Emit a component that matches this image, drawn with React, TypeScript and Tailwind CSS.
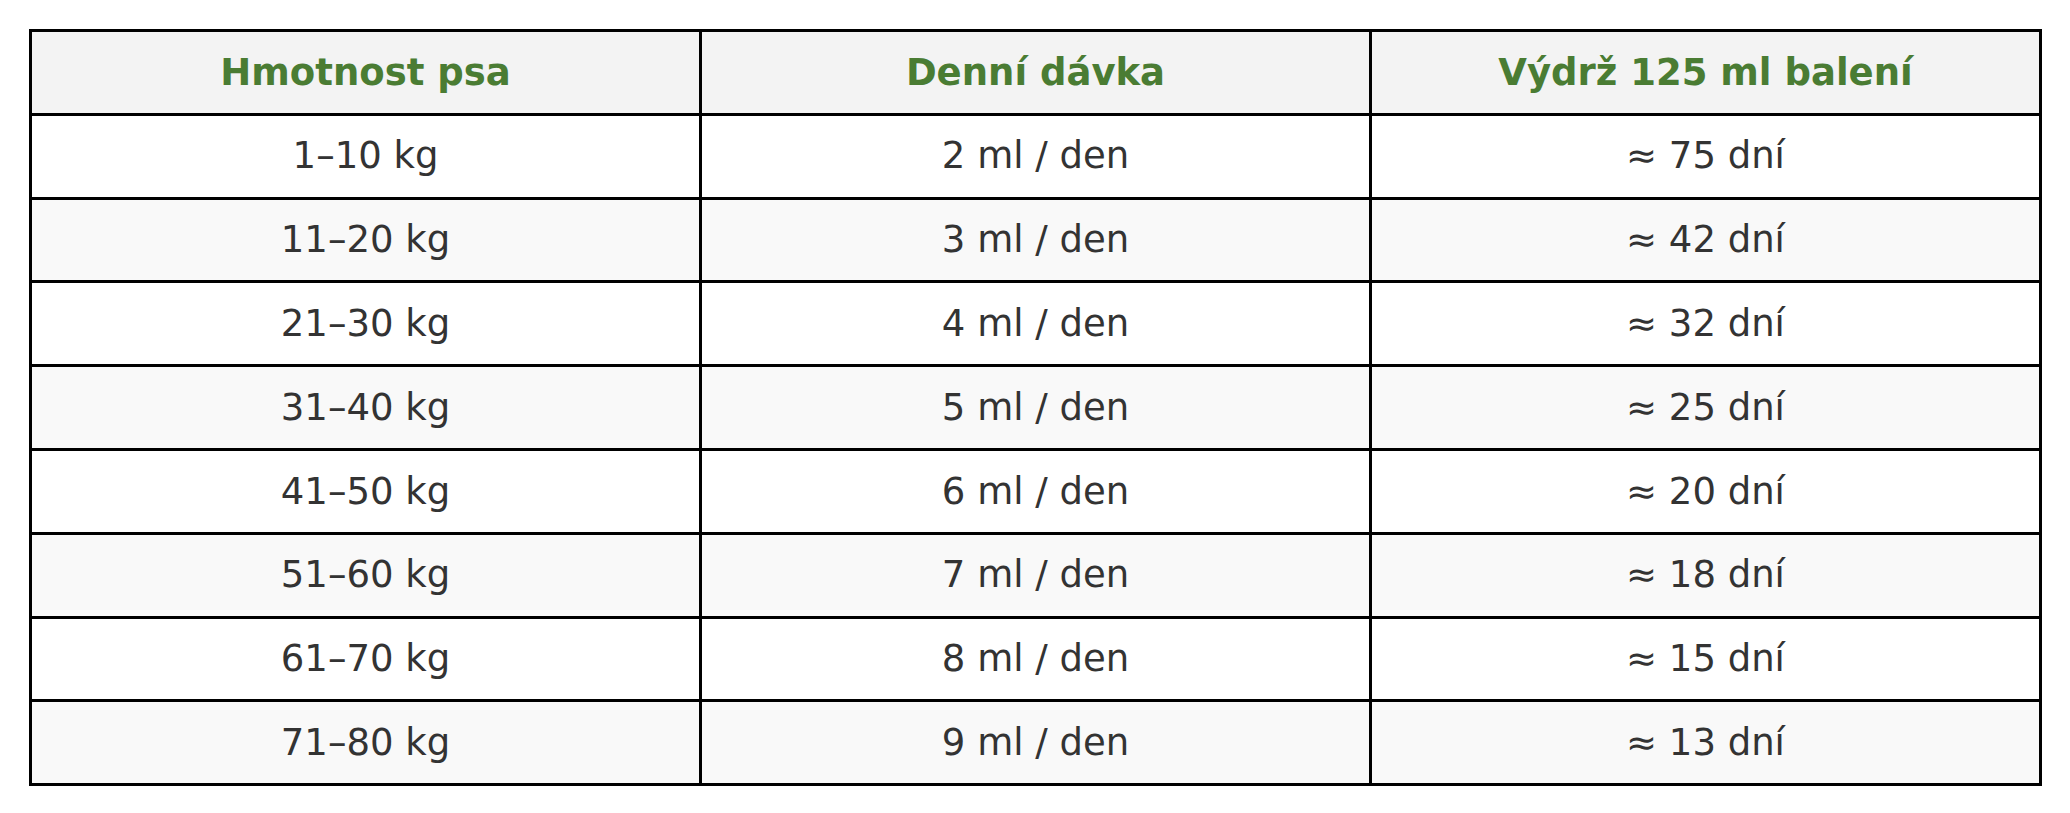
import React from 'react';

export default function App() {
  const rows = [
  ['1–10 kg', '2 ml / den', '≈ 75 dní'],
  ['11–20 kg', '3 ml / den', '≈ 42 dní'],
  ['21–30 kg', '4 ml / den', '≈ 32 dní'],
  ['31–40 kg', '5 ml / den', '≈ 25 dní'],
  ['41–50 kg', '6 ml / den', '≈ 20 dní'],
  ['51–60 kg', '7 ml / den', '≈ 18 dní'],
  ['61–70 kg', '8 ml / den', '≈ 15 dní'],
  ['71–80 kg', '9 ml / den', '≈ 13 dní']];

  const headers = ['Hmotnost psa', 'Denní dávka', 'Výdrž 125 ml balení'];

  return (
    <div className="bg-white w-[2070px] h-[813px] pl-[29px] pt-[29px] font-['DejaVu_Sans',sans-serif]">
      <table className="w-[2013px] border-collapse table-fixed border-[3px] border-black text-[37px]">
        <thead>
          <tr className="bg-[#f3f3f3] h-[83.8px]">
            {headers.map((h) =>
            <th key={h} className="border-[3px] border-black text-center font-bold text-[#4a7c33] p-0">
                {h}
              </th>
            )}
          </tr>
        </thead>
        <tbody>
          {rows.map((r, i) =>
          <tr key={i} className={`h-[83.8px] ${i % 2 === 1 ? 'bg-[#f9f9f9]' : 'bg-white'}`}>
              {r.map((c, j) =>
            <td key={j} className="border-[3px] border-black text-center text-[#333333] p-0">
                  {c}
                </td>
            )}
            </tr>
          )}
        </tbody>
      </table>
    </div>);

}
